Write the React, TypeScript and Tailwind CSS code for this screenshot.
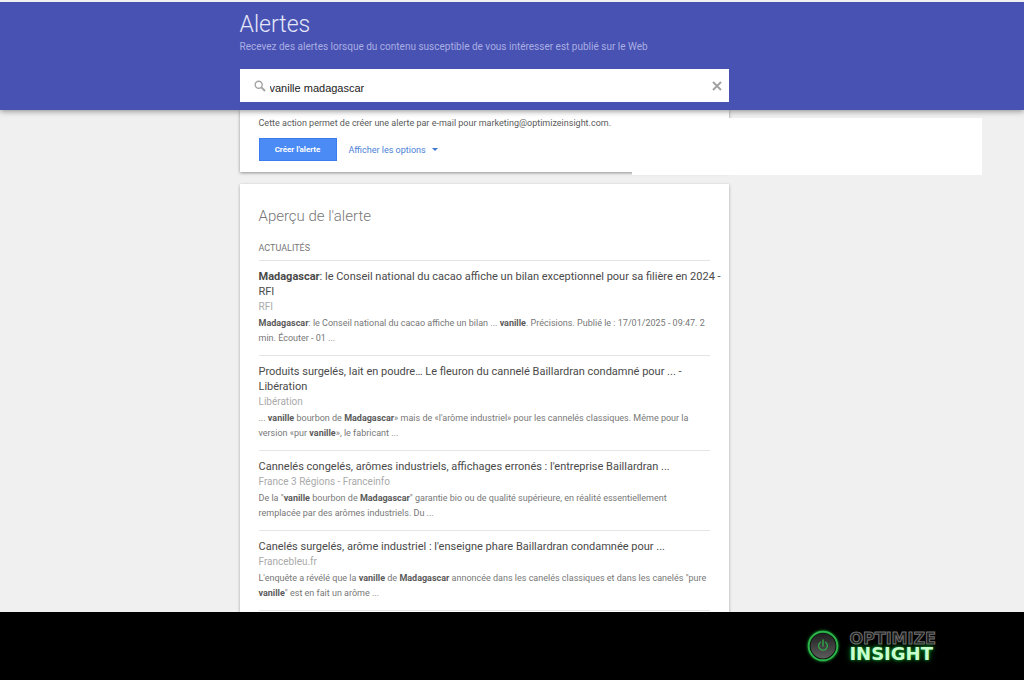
import type { ReactNode } from "react";

type Article = { title: ReactNode; source: string; snippet: ReactNode };

const articles: Article[] = [
  {
    title: (
      <>
        <b>Madagascar</b>: le Conseil national du cacao affiche un bilan exceptionnel pour sa filière en 2024 - RFI
      </>
    ),
    source: "RFI",
    snippet: (
      <>
        <b>Madagascar</b>: le Conseil national du cacao affiche un bilan ... <b>vanille</b>. Précisions. Publié le :
        17/01/2025 - 09:47. 2 min. Écouter - 01 ...
      </>
    ),
  },
  {
    title: "Produits surgelés, lait en poudre… Le fleuron du cannelé Baillardran condamné pour ... - Libération",
    source: "Libération",
    snippet: (
      <>
        ... <b>vanille</b> bourbon de <b>Madagascar</b>» mais de «l'arôme industriel» pour les cannelés classiques. Même
        pour la version «pur <b>vanille</b>», le fabricant ...
      </>
    ),
  },
  {
    title: "Cannelés congelés, arômes industriels, affichages erronés : l'entreprise Baillardran ...",
    source: "France 3 Régions - Franceinfo",
    snippet: (
      <>
        De la "<b>vanille</b> bourbon de <b>Madagascar</b>" garantie bio ou de qualité supérieure, en réalité
        essentiellement remplacée par des arômes industriels. Du ...
      </>
    ),
  },
  {
    title: "Canelés surgelés, arôme industriel : l'enseigne phare Baillardran condamnée pour ...",
    source: "Francebleu.fr",
    snippet: (
      <>
        L'enquête a révélé que la <b>vanille</b> de <b>Madagascar</b> annoncée dans les canelés classiques et dans les
        canelés "pure <b>vanille</b>" est en fait un arôme ...
      </>
    ),
  },
];

function SearchIcon() {
  return (
    <svg viewBox="0 0 12 12" className="h-3 w-3 shrink-0" fill="none" stroke="#a3a3a3" aria-hidden="true">
      <circle cx="4.7" cy="4.7" r="3.5" strokeWidth="1.4" />
      <path d="M7.4 7.4 L11 11" strokeWidth="1.9" />
    </svg>
  );
}

function PowerLogo() {
  return (
    <svg viewBox="0 0 36 36" className="h-9 w-9 shrink-0" fill="none" aria-hidden="true">
      <defs>
        <linearGradient id="face" x1="0" y1="0" x2="0" y2="1">
          <stop offset="0" stopColor="#202020" />
          <stop offset="1" stopColor="#5c5c5c" />
        </linearGradient>
        <filter id="glow" x="-30%" y="-30%" width="160%" height="160%">
          <feGaussianBlur stdDeviation="1.3" />
        </filter>
      </defs>
      <circle cx="18" cy="18" r="14.5" stroke="#0a6e22" strokeWidth="3" filter="url(#glow)" />
      <circle cx="18" cy="18" r="14.3" fill="#0a160c" stroke="#2db54b" strokeWidth="1.9" />
      <circle cx="18" cy="18" r="12.4" fill="url(#face)" />
      <path d="M15.4 14.2 A4.4 4.4 0 1 0 20.6 14.2" stroke="#2fa348" strokeWidth="1.4" strokeLinecap="round" />
      <path d="M18 12 V18" stroke="#2fa348" strokeWidth="1.5" strokeLinecap="round" />
    </svg>
  );
}

export default function App() {
  return (
    <div className="flex h-screen flex-col overflow-hidden bg-[#f0f0f0] font-['Roboto',sans-serif]">
      <header className="relative z-10 border-t-2 border-[#f0f0f0] bg-[#4852b3] pb-2 shadow-[0_1px_6px_rgba(0,0,0,0.45)]">
        <div className="mx-auto w-full max-w-[489px] -translate-x-7">
          <h1 className="pt-[9px] text-[23px] leading-7 font-light text-[#e6e8f8]">Alertes</h1>
          <p className="text-[10px] leading-4 text-[#a9aee2]">
            Recevez des alertes lorsque du contenu susceptible de vous intéresser est publié sur le Web
          </p>
          <div className="mt-[14px] flex h-[33px] items-center bg-white pr-[7px] pl-[14px]">
            <SearchIcon />
            <input
              type="text"
              aria-label="Créer une alerte sur"
              defaultValue="vanille madagascar"
              className="ml-1 min-w-0 flex-1 pt-1 font-['Liberation_Sans',sans-serif] text-[11px] leading-4 text-[#222] outline-none"
            />
            <button type="button" aria-label="Effacer" className="flex">
              <svg viewBox="0 0 10 10" className="h-[10px] w-[10px]" stroke="#a0a0a0" strokeWidth="1.8" aria-hidden="true">
                <path d="M1 1 L9 9 M9 1 L1 9" />
              </svg>
            </button>
          </div>
        </div>
      </header>

      <main className="min-h-0 flex-1 overflow-hidden">
        <div className="mx-auto w-full max-w-[489px] -translate-x-7">
          <section className="relative bg-white px-[19px] pt-[5px] pb-[11px] shadow-[0_1px_3px_rgba(0,0,0,0.4)]">
            <div className="absolute top-2 -right-[253px] h-[57px] w-[350px] bg-white" />
            <p className="relative text-[9px] leading-4 text-[#5a5a5a]">
              Cette action permet de créer une alerte par e-mail pour marketing@optimizeinsight.com.
            </p>
            <div className="relative mt-[7px] flex items-center gap-3">
              <button
                type="button"
                className="h-[23px] w-[78px] border border-[#3b7ded] bg-[#4a8bf5] text-[8px] leading-4 font-bold text-white"
              >
                Créer l'alerte
              </button>
              <button type="button" className="flex items-center gap-[6px] text-[9px] leading-4 text-[#4c82d8]">
                Afficher les options
                <svg viewBox="0 0 6 3" className="h-[3px] w-[6px]" fill="#3f77cf" aria-hidden="true">
                  <path d="M0 0 H6 L3 3 Z" />
                </svg>
              </button>
            </div>
          </section>

          <section className="mt-3 bg-white px-[19px] pt-[22px] pb-6 shadow-[0_1px_3px_rgba(0,0,0,0.3)]">
            <h2 className="text-[15px] leading-5 font-light text-[#777]">Aperçu de l'alerte</h2>
            <h3 className="mt-[14px] pb-1 text-[9px] leading-4 text-[#777]">ACTUALITÉS</h3>
            <ul>
              {articles.map((article) => (
                <li key={article.source} className="border-t border-[#e4e4e4] pt-2 pb-[9px]">
                  <a href="#" className="-mr-[15px] block text-[11px] leading-[15px] text-[#4a4a4a]">
                    {article.title}
                  </a>
                  <p className="text-[10px] leading-4 text-[#aaa]">{article.source}</p>
                  <p className="pt-px text-[9px] leading-[15px] text-[#777] [&_b]:text-[#5a5a5a]">{article.snippet}</p>
                </li>
              ))}
              <li className="border-t border-[#e4e4e4]" />
            </ul>
          </section>
        </div>
      </main>

      <footer className="relative z-10 flex h-[68px] shrink-0 items-center justify-end gap-2 bg-black pr-[88px]">
        <PowerLogo />
        <div className="font-['DejaVu_Sans',sans-serif] font-bold">
          <p className="text-[16px] leading-[15px] text-[#1c1c1c] [-webkit-text-stroke:1px_#707070]">OPTIMIZE</p>
          <p className="text-[18px] leading-[15px] text-[#c9ffcf] [text-shadow:0_0_3px_#12a832,0_0_6px_#0a7a22]">
            INSIGHT
          </p>
        </div>
      </footer>
    </div>
  );
}
